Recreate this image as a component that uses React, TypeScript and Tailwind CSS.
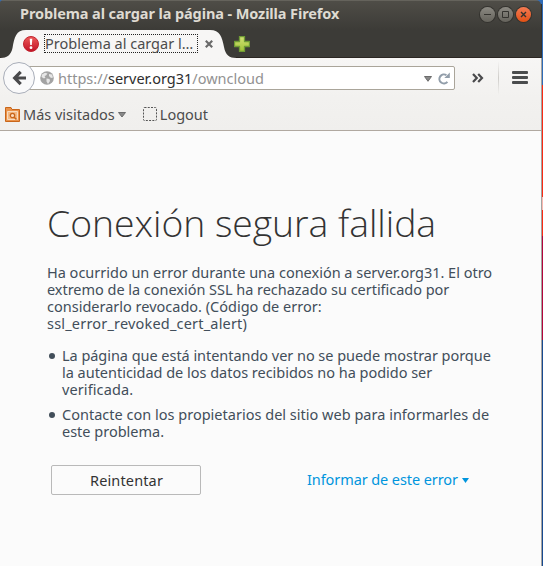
import type { ReactNode } from "react";

function WindowButton({ close, children }: { close?: boolean; children: ReactNode }) {
  return (
    <div
      className={`flex h-[15px] w-[15px] items-center justify-center rounded-full shadow-[0_0_0_1px_#34332f] ${
        close ? "bg-linear-to-b from-[#f47a50] to-[#e2500f]" : "bg-linear-to-b from-[#8b8982] to-[#65635c]"
      }`}
    >
      <svg width="15" height="15" viewBox="0 0 15 15" fill="none" stroke="#34332f" strokeWidth="1">
        {children}
      </svg>
    </div>
  );
}

function TitleBar() {
  return (
    <div className="flex h-[30px] items-start justify-between border-t border-[#65635c] bg-linear-to-b from-[#4f4d47] to-[#3c3b37] pr-[10px] pl-[20px]">
      <div className="h-[24px] text-[14.5px] leading-[24px] font-bold tracking-[-0.1px] whitespace-nowrap text-[#dfdbd2]">
        Problema al cargar la página - Mozilla Firefox
      </div>
      <div className="mt-[6px] flex gap-[3px]">
        <WindowButton>
          <path d="M4 7.5h7" />
        </WindowButton>
        <WindowButton>
          <path d="M4.5 4.5h6v6h-6z" />
        </WindowButton>
        <WindowButton close>
          <path d="M5 5l5 5M10 5l-5 5" strokeWidth="1.4" />
        </WindowButton>
      </div>
    </div>
  );
}

function TabStrip() {
  return (
    <div className="relative flex h-[28px] items-center bg-[#3c3b37] shadow-[inset_0_-1px_0_#2b2622]">
      <svg className="absolute top-0 left-0" width="240" height="28" viewBox="0 0 240 28">
        <path
          d="M0 28C7 28 11 25 12.5 18C14.500 7 16 0 26 0H210C220 0 222 7 224 17C225.500 25 229 28 237 28Z"
          fill="#f7f6f5"
        />
      </svg>
      <div className="relative flex h-[28px] w-full items-center pl-[23px]">
        <svg width="16" height="16" viewBox="0 0 16 16">
          <defs>
            <linearGradient id="alert" x1="0" y1="0" x2="0" y2="1">
              <stop offset="0" stopColor="#ee5a58" />
              <stop offset="1" stopColor="#c01226" />
            </linearGradient>
            <linearGradient id="plus" x1="0" y1="0" x2="0" y2="1">
              <stop offset="0" stopColor="#d3e276" />
              <stop offset="1" stopColor="#9fc136" />
            </linearGradient>
          </defs>
          <circle cx="8" cy="8" r="7.500" fill="url(#alert)" stroke="#c2242f" />
          <path d="M6.700 2.800h2.600l-.5 6.200H7.200z" fill="#fff" />
          <circle cx="8" cy="11.700" r="1.400" fill="#fff" />
        </svg>
        <div className="-mt-px ml-[5px] h-[19px] w-[154px] border border-dotted border-[#222] text-[14.5px] leading-[17px] whitespace-nowrap text-[#4c4c4c]">
          Problema al cargar l…
        </div>
        <svg className="ml-[7px]" width="8" height="8" viewBox="0 0 8 8" stroke="#6a6a6a" strokeWidth="2.200">
          <path d="M.8.8l6.400 6.400M7.200.8L.8 7.200" />
        </svg>
        <svg className="ml-[21px]" width="16" height="16" viewBox="0 0 16 16">
          <path
            d="M5.500.5h5v5h5v5h-5v5h-5v-5h-5v-5h5z"
            fill="url(#plus)"
            stroke="#6f9a35"
            strokeWidth="1.300"
            strokeLinejoin="round"
          />
        </svg>
      </div>
    </div>
  );
}

function NavBar() {
  return (
    <div className="relative flex h-[40px] items-center bg-linear-to-b from-[#f7f6f5] to-[#f2f1ef] pl-[18px]">
      <div className="flex h-[24px] w-[437px] items-center rounded-r-[2px] border border-[#aaa59a] bg-white pl-[21px]">
        <svg width="14" height="14" viewBox="0 0 14 14">
          <circle cx="7" cy="7" r="6.800" fill="#a3a3a3" />
          <path
            d="M2 3.500L5 1.800l2.500.7L6 4.500 4.500 5l1 1.500L4 7.500 1.500 6zM6.500 7.500l3 .5.5 2-2 3-1.500-2.500zM9 3l3 .5 1 3-2 .5-2-2z"
            fill="#e6e6e6"
          />
        </svg>
        <div className="ml-[4px] text-[14.5px] leading-[22px] whitespace-nowrap text-[#929292]">
          https://<span className="text-[#2e2e2e]">server.org31</span>/owncloud
        </div>
        <svg className="mt-[2px] ml-auto" width="8" height="6" viewBox="0 0 8 6">
          <path d="M.5.500h7L4 5.300z" fill="#888" stroke="#6c6c6c" strokeLinejoin="round" />
        </svg>
        <svg className="mr-[4px] ml-[6px]" width="12" height="13" viewBox="0 0 12 13">
          <path d="M9.400 9.800A4.500 4.500 0 1 1 8.400 3.200" fill="none" stroke="#929eaa" strokeWidth="2.100" />
          <path d="M11.800.5V6H6.300z" fill="#929eaa" />
        </svg>
      </div>
      <svg className="ml-[17px]" width="12" height="10" viewBox="0 0 12 10" fill="none" stroke="#4a4a4c" strokeWidth="2.200">
        <path d="M1 .9L4.800 5 1 9.100M6.200.9L10 5 6.200 9.100" />
      </svg>
      <div className="ml-[14px] h-[34px] w-px bg-linear-to-b from-transparent via-[#cfcdca] to-transparent" />
      <div className="mb-px ml-[13px] flex w-[16px] flex-col gap-[2px]">
        <div className="h-[3px] rounded-[1px] bg-[#4a4c4d]" />
        <div className="h-[3px] rounded-[1px] bg-[#4a4c4d]" />
        <div className="h-[3px] rounded-[1px] bg-[#4a4c4d]" />
      </div>
      <div className="absolute top-[4px] left-[3px] flex h-[32px] w-[32px] items-center justify-center rounded-full border border-[#a9aeb9] bg-[#f9f9fa]">
        <svg width="15" height="16" viewBox="0 0 15 16" fill="none" stroke="#4a4a4c" strokeWidth="3.200">
          <path d="M8.700 1.800L2.700 8 8.700 14.200M3 8H14" />
        </svg>
      </div>
    </div>
  );
}

function BookmarksBar() {
  return (
    <div className="flex h-[33px] items-center border-b border-[#b0a8a0] bg-linear-to-b from-[#f2f1ef] to-[#f0efed] pl-[5px] text-[14.5px] text-[#4c4c4c]">
      <svg width="15" height="15" viewBox="0 0 15 15" fill="none" stroke="#c9661a">
        <path d="M.5.500h5.500l1 2h7.500v12H.5z" fill="#e9924a" />
        <path d="M2.500 4.500h10v8h-10z" fill="#f3b984" stroke="#f7dcc0" />
        <circle cx="7.500" cy="8.500" r="2.200" fill="#f9dcc0" strokeWidth="1.300" />
        <path d="M9.200 10.200l2.300 2.300" strokeWidth="1.500" />
      </svg>
      <div className="ml-[3px] leading-[20px] whitespace-nowrap">Más visitados</div>
      <svg className="mt-[2px] ml-[3px]" width="8" height="6" viewBox="0 0 8 6">
        <path d="M.5.500h7L4 5z" fill="#888" stroke="#6c6c6c" strokeLinejoin="round" />
      </svg>
      <svg className="ml-[17px]" width="14" height="14" viewBox="0 0 14 14">
        <rect x=".5" y=".5" width="13" height="13" rx="1" fill="none" stroke="#555" strokeDasharray="2 1.250" />
      </svg>
      <div className="ml-[3px] leading-[20px]">Logout</div>
    </div>
  );
}

function ErrorPage() {
  return (
    <main className="h-[435px] bg-[#fbfbfb] pt-[67px] pl-[47px] text-[14.5px] leading-[17px] whitespace-nowrap text-[#424e5a]">
      <h1 className="font-['Open_Sans','Noto_Sans',sans-serif] text-[37.3px] leading-[50px] font-[340] tracking-[-0.02px] text-[#333]">
        Conexión segura fallida
      </h1>
      <div className="mt-[16px]">
        <p className="tracking-[-0.01px]">Ha ocurrido un error durante una conexión a server.org31. El otro</p>
        <p className="tracking-[-0.03px]">extremo de la conexión SSL ha rechazado su certificado por</p>
        <p>considerarlo revocado. (Código de error:</p>
        <p className="tracking-[0.19px]">ssl_error_revoked_cert_alert)</p>
      </div>
      <ul className="mt-[15px] flex flex-col gap-[8px]">
        <li className="flex gap-[8px]">
          <span className="mt-[6px] ml-[2px] h-[6px] w-[6px] rounded-full bg-[#424e5a]" />
          <div className="-ml-px">
            <p className="tracking-[-0.04px]">La página que está intentando ver no se puede mostrar porque</p>
            <p className="tracking-[-0.02px]">la autenticidad de los datos recibidos no ha podido ser</p>
            <p className="tracking-[0.1px]">verificada.</p>
          </div>
        </li>
        <li className="flex gap-[8px]">
          <span className="mt-[6px] ml-[2px] h-[6px] w-[6px] rounded-full bg-[#424e5a]" />
          <div className="-ml-px">
            <p className="tracking-[0.01px]">Contacte con los propietarios del sitio web para informarles de</p>
            <p>este problema.</p>
          </div>
        </li>
      </ul>
      <div className="mt-[25px] flex items-center pl-[4px]">
        <button className="h-[30px] w-[150px] rounded-[2px] border border-[#b9b9b9] bg-[#fbfbfb] pl-px tracking-[0.14px] text-[#333]">
          Reintentar
        </button>
        <div className="mb-[2px] ml-[106px] flex items-center tracking-[-0.09px] text-[#0095dd]">
          <span>Informar de este error</span>
          <svg className="mt-[3px] ml-[4px]" width="7" height="5" viewBox="0 0 7 5">
            <path d="M0 0h7L3.500 5z" fill="#0095dd" />
          </svg>
        </div>
      </div>
    </main>
  );
}

export default function App() {
  return (
    <div className="flex h-[566px] w-[543px] overflow-hidden bg-[#2f6cb8] font-['Noto_Sans','Open_Sans',sans-serif]">
      <div className="w-[541px] overflow-hidden rounded-tl-[3px] rounded-tr-[5px]">
        <TitleBar />
        <TabStrip />
        <NavBar />
        <BookmarksBar />
        <ErrorPage />
      </div>
      <div className="w-px">
        <div className="mt-[4px] h-[54px] bg-[#34332f]" />
        <div className="h-[508px] bg-[#a5a3a0]" />
      </div>
      <div className="w-px">
        <div className="h-[85px] bg-[#2f6cb8]" />
        <div className="h-[112px] bg-[#fa2a14]" />
        <div className="h-[13px] bg-[#fbb8b0]" />
        <div className="h-[26px] bg-[#fa2a14]" />
        <div className="h-[104px] bg-[#b3053c]" />
        <div className="h-[226px] bg-[#174a90]" />
      </div>
    </div>
  );
}
